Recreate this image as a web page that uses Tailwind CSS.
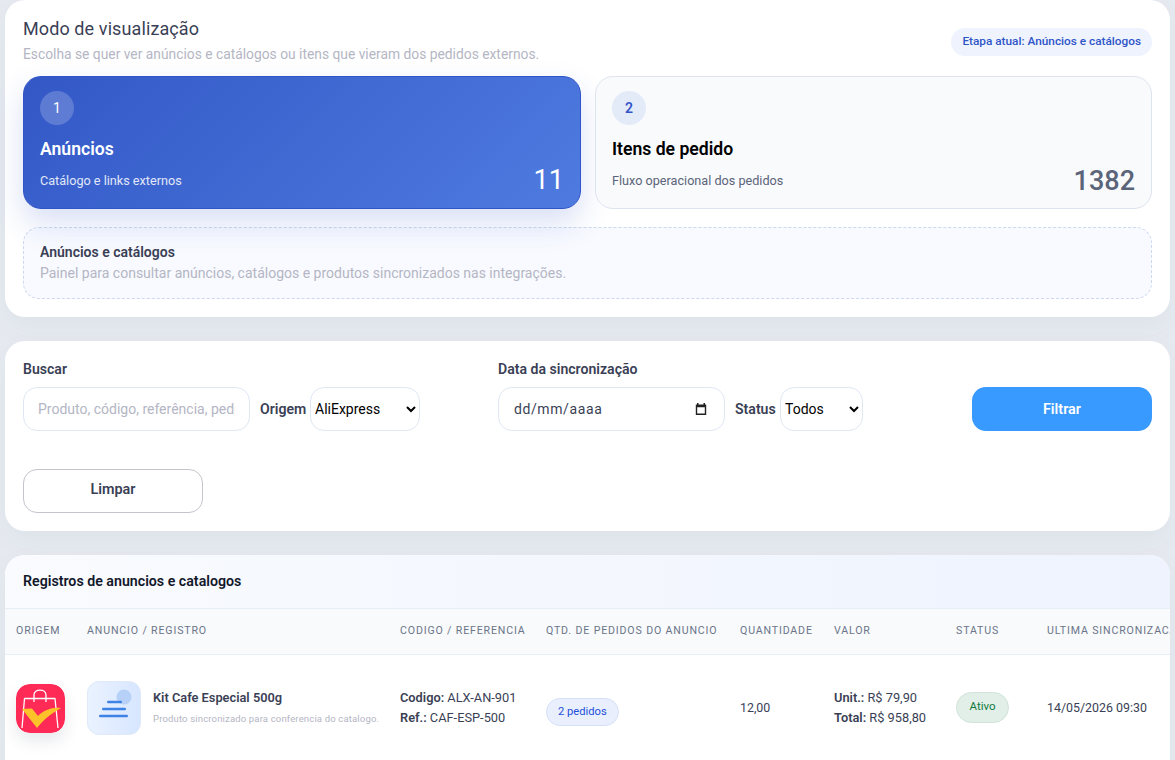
<!DOCTYPE html>
<html lang="pt-BR">
<head>
<meta charset="utf-8">
<title>Modo de visualização</title>
<script src="https://cdn.jsdelivr.net/npm/@tailwindcss/browser@4"></script>
</head>
<body class="bg-[#e6eaf0] font-['Roboto',sans-serif] h-[760px] overflow-hidden text-[#3a3f55]">
<main class="px-[5px] flex flex-col gap-6">

<section class="bg-white rounded-[20px] h-[317px] px-[18px] pt-[18px] shadow-[0_10px_30px_rgba(30,50,90,0.04)]">
  <div class="flex justify-between items-start h-[58px]">
    <div>
      <h2 class="text-[18px] leading-[22px] text-[#3a3f55] tracking-[0.1px]">Modo de visualização</h2>
      <p class="text-[13.82px] leading-[20px] mt-[4px] text-[#b4b6c4]">Escolha se quer ver anúncios e catálogos ou itens que vieram dos pedidos externos.</p>
    </div>
    <span class="mt-[10px] h-[28px] px-[11px] flex items-center rounded-full bg-[#eef3fe] text-[#2f55c8] text-[11.8px] font-medium">Etapa atual: Anúncios e catálogos</span>
  </div>
  <div class="grid grid-cols-[558px_557px] gap-[14px]">
    <div class="h-[133px] rounded-[18px] border border-[#2f55c8] bg-linear-135 from-[#3358c6] to-[#4f7be0] px-[16px] pt-[14px] shadow-[0_14px_30px_rgba(47,85,200,0.18)] text-white">
      <span class="w-[34px] h-[34px] rounded-full bg-white/20 flex items-center justify-center text-[14px]">1</span>
      <h3 class="mt-[14px] text-[17.6px] leading-[21px] font-semibold">Anúncios</h3>
      <div class="flex justify-between items-center mt-[5px] h-[32px]">
        <p class="text-[12.65px] text-white/85">Catálogo e links externos</p>
        <strong class="text-[27.2px] font-normal leading-none">11</strong>
      </div>
    </div>
    <div class="h-[133px] rounded-[18px] border border-[#dde4f0] bg-[#f8fafc] px-[16px] pt-[14px]">
      <span class="w-[34px] h-[34px] rounded-full bg-[#e3eaf8] flex items-center justify-center text-[14px] font-semibold text-[#2f55c8]">2</span>
      <h3 class="mt-[14px] text-[17.6px] leading-[21px] font-semibold text-black">Itens de pedido</h3>
      <div class="flex justify-between items-center mt-[5px] h-[32px]">
        <p class="text-[12.65px] text-[#5b6479]">Fluxo operacional dos pedidos</p>
        <strong class="text-[27px] font-medium leading-none text-[#5b6479]">1382</strong>
      </div>
    </div>
  </div>
  <div class="mt-[18px] h-[72px] rounded-[16px] border border-dashed border-[#cdd9ee] bg-[#f8faff] px-[16px] pt-[14px]">
    <h4 class="text-[14px] leading-[20px] font-semibold text-[#3a3f55]">Anúncios e catálogos</h4>
    <p class="text-[14px] leading-[20px] mt-[1px] text-[#b4b6c4]">Painel para consultar anúncios, catálogos e produtos sincronizados nas integrações.</p>
  </div>
</section>

<section class="bg-white rounded-[20px] h-[190px] px-[18px] pt-[18px] shadow-[0_10px_30px_rgba(30,50,90,0.04)]">
  <div class="grid grid-cols-[475px_474px_180px]">
    <div>
      <label class="block text-[14.08px] leading-[20px] font-semibold mb-[8px]">Buscar</label>
      <div class="flex items-center">
        <input type="text" placeholder="Produto, código, referência, pedido" class="w-[227px] h-[44px] rounded-[14px] border border-[#dfe7f3] px-[14px] text-[14px] bg-white placeholder:text-[#b4b6c4] outline-none">
        <span class="ml-[10px] mr-[3px] pt-[1px] w-[47px] text-[14.08px] font-semibold whitespace-nowrap">Origem</span>
        <select class="w-[110px] h-[44px] rounded-[14px] border border-[#dfe7f3] bg-white text-[14px] text-black outline-none appearance-auto"><option>AliExpress</option></select>
      </div>
    </div>
    <div>
      <label class="block text-[14.08px] leading-[20px] font-semibold mb-[8px]">Data da sincronização</label>
      <div class="flex items-center">
        <div class="w-[227px] h-[44px] rounded-[14px] border border-[#dfe7f3] pl-[15px] pr-[16px] flex items-center justify-between text-[14px] tracking-[0.6px] text-[#3a3f55]">
          <span>dd/mm/aaaa</span>
          <svg width="14" height="14" viewBox="0 0 14 14" class="text-[#222]"><path fill="currentColor" d="M3 1h1.500v1.500h5V1H11v1.500h1.200V13H1.800V2.500H3zM3.200 5.200v6.400h7.600V5.200z"/></svg>
        </div>
        <span class="ml-[10px] mr-[3px] pt-[1px] w-[42px] text-[14.08px] font-semibold whitespace-nowrap">Status</span>
        <select class="w-[83px] h-[44px] rounded-[14px] border border-[#dfe7f3] bg-white text-[14px] text-black outline-none appearance-auto"><option>Todos</option></select>
      </div>
    </div>
    <div class="pt-[28px]">
      <button class="w-[180px] h-[44px] rounded-[14px] bg-[#3899ff] text-white text-[14.4px] font-semibold pt-[1px]">Filtrar</button>
    </div>
  </div>
  <button class="mt-[38px] w-[180px] h-[44px] rounded-[14px] border border-[#c2c5cc] bg-white text-[14.4px] font-semibold text-[#3a3f55] pb-[2px]">Limpar</button>
</section>

<section class="bg-white rounded-t-[20px] h-[300px] overflow-hidden shadow-[0_10px_30px_rgba(30,50,90,0.04)]">
  <div class="h-[54px] px-[18px] flex items-center bg-linear-to-r from-[#f9fbfe] to-[#eef3fe] border-b border-[#e6eef8]">
    <h3 class="text-[14.2px] font-semibold text-[#12172a]">Registros de anuncios e catalogos</h3>
  </div>
  <table class="table-fixed w-[1300px] border-collapse text-left">
    <colgroup>
      <col class="w-[71px]"><col class="w-[313px]"><col class="w-[146px]"><col class="w-[194px]"><col class="w-[94px]"><col class="w-[122px]"><col class="w-[91px]"><col class="w-[269px]">
    </colgroup>
    <thead>
      <tr class="h-[45px] bg-[#f8fafc] border-b border-[#e6eef8] text-[10.6px] text-[#6b7488] uppercase tracking-[0.85px] whitespace-nowrap">
        <th class="pl-[11px] font-normal">Origem</th>
        <th class="pl-[11px] font-normal">Anuncio / Registro</th>
        <th class="pl-[11px] font-normal">Codigo / Referencia</th>
        <th class="pl-[11px] font-normal">Qtd. de pedidos do anuncio</th>
        <th class="pl-[11px] font-normal">Quantidade</th>
        <th class="pl-[11px] font-normal">Valor</th>
        <th class="pl-[11px] font-normal">Status</th>
        <th class="pl-[11px] font-normal">Ultima sincronizacao</th>
      </tr>
    </thead>
    <tbody>
      <tr class="h-[108px] text-[12.8px] text-[#3a3f55]">
        <td class="pl-[11px]">
          <div class="w-[49px] h-[49px] rounded-[14px] shadow-[0_8px_16px_rgba(30,40,70,0.10)]">
            <svg viewBox="0 0 49 49" width="49" height="49" class="rounded-[14px]">
              <rect width="49" height="49" rx="14" fill="#ff2b56"/>
              <path d="M6 44 L8.500 14.500 H39 L42 44" fill="none" stroke="#fff" stroke-width="1.300" stroke-linejoin="round"/>
              <path d="M18 18 V11 C18 4.500 30 4.500 30 11 V18" fill="none" stroke="#fff" stroke-width="1.300"/>
              <path d="M6 25 L16 24.500 L22 32 C28 26 36 23 45 24 C36 29 28 35 21 44 Z" fill="#fdc22a"/>
            </svg>
          </div>
        </td>
        <td class="pl-[11px]">
          <div class="flex items-center gap-[12px]">
            <div class="w-[54px] h-[54px] rounded-[12px] border border-[#dfe9f8] bg-linear-to-r from-[#eaf2ff] to-[#d7e6ff] shrink-0">
              <svg viewBox="0 0 52 52" width="52" height="52">
                <circle cx="36" cy="15" r="7.500" fill="#b6d0f8"/>
                <rect x="19" y="18.750" width="15" height="2.500" rx="1.250" fill="#3e82e6"/>
                <rect x="14" y="25.750" width="24" height="2.500" rx="1.250" fill="#3e82e6"/>
                <rect x="11" y="32.750" width="29" height="2.500" rx="1.250" fill="#3e82e6"/>
              </svg>
            </div>
            <div>
              <div class="font-semibold leading-[16px] -mt-[1px]">Kit Cafe Especial 500g</div>
              <div class="text-[9.500px] leading-[14px] mt-[6px] text-[#b4b6c4] tracking-[0.16px] whitespace-nowrap">Produto sincronizado para conferencia do catalogo.</div>
            </div>
          </div>
        </td>
        <td class="pl-[11px] leading-[20px] whitespace-nowrap">
          <div><b class="font-semibold">Codigo:</b> ALX-AN-901</div>
          <div><b class="font-semibold">Ref.:</b> CAF-ESP-500</div>
        </td>
        <td class="pl-[11px]">
          <span class="inline-flex items-center h-[28px] mt-[8px] px-[11px] rounded-full bg-[#e9effc] border border-[#d5e0f8] text-[11.2px] text-[#1f50d8]">2 pedidos</span>
        </td>
        <td class="pl-[11px] text-[12.4px]">12,00</td>
        <td class="pl-[11px] leading-[20px] whitespace-nowrap">
          <div><b class="font-semibold">Unit.:</b> R$ 79,90</div>
          <div><b class="font-semibold">Total:</b> R$ 958,80</div>
        </td>
        <td class="pl-[11px]">
          <span class="inline-flex items-center h-[31px] px-[12.500px] pb-[2px] mb-[2px] rounded-full bg-[#e2efe8] border border-[#cfe3d8] text-[11.5px] text-[#0f7a3c]">Ativo</span>
        </td>
        <td class="pl-[11px] text-[12.4px] whitespace-nowrap">14/05/2026 09:30</td>
      </tr>
    </tbody>
  </table>
</section>
</main>
</body>
</html>
